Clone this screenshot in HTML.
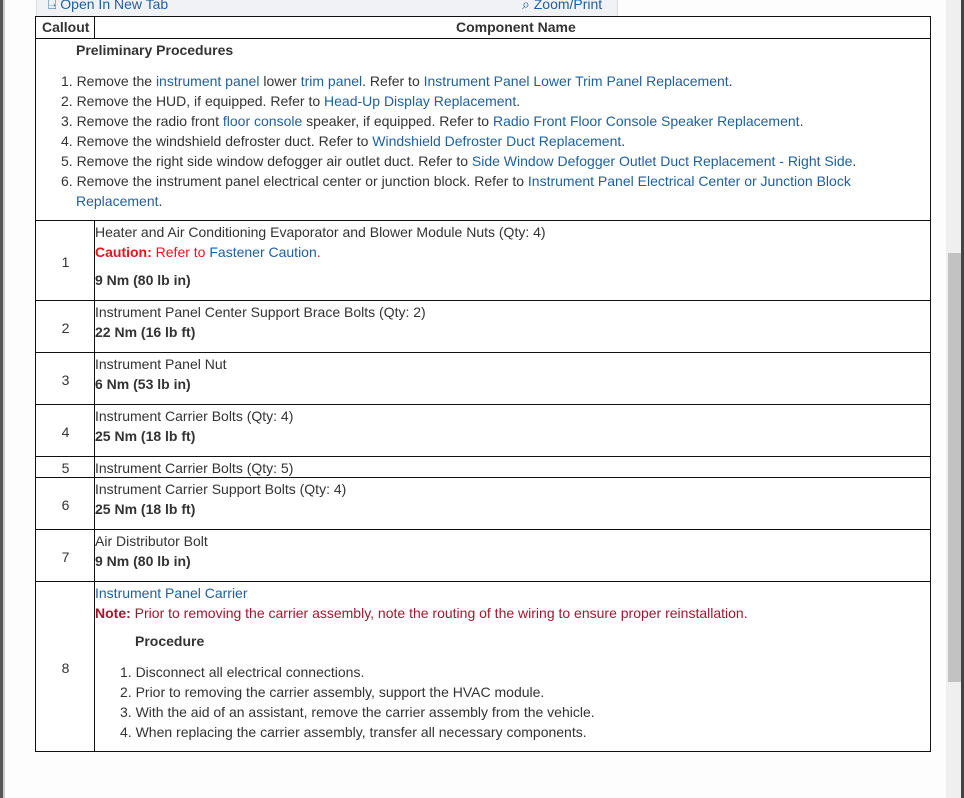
<!DOCTYPE html>
<html><head><meta charset="utf-8"><style>
*{margin:0;padding:0;box-sizing:border-box}
body{width:964px;height:798px;background:#fdfdfd;position:relative;overflow:hidden;font-family:"Liberation Sans",sans-serif;font-size:14px;color:#333}
.a{position:absolute;white-space:nowrap;line-height:20px}
.l{color:#1f5f9f}
.b{font-weight:bold}
.hl{position:absolute;left:35px;width:896px;height:1px;background:#111}
.red{color:#e8141c}
.nt{color:#a3172e}
.c{position:absolute;left:36px;width:59px;text-align:center;line-height:20px}
</style></head><body>
<div style="position:absolute;left:0;top:0;width:3px;height:798px;background:#555"></div>
<div style="position:absolute;left:3px;top:0;width:2px;height:798px;background:#ccc"></div>
<div style="position:absolute;right:0;top:0;width:3px;height:798px;background:#444"></div>
<div style="position:absolute;left:946px;top:0;width:15px;height:798px;background:#efefef"></div>
<div style="position:absolute;left:948px;top:253px;width:13px;height:429px;background:#c2c2c2"></div>
<div style="position:absolute;left:36px;top:-4px;width:582px;height:21px;background:#f0f2f5;border:1px solid #d8dbe0"></div>
<div class="a l" style="left:48px;top:-6px">⍈ Open In New Tab</div>
<div class="a l" style="left:522px;top:-6px">⌕ Zoom/Print</div>
<div style="position:absolute;left:35px;top:16px;width:896px;height:736px;border:1px solid #111;background:#fff"></div>
<div style="position:absolute;left:94px;top:16px;width:1px;height:22px;background:#111"></div>
<div style="position:absolute;left:94px;top:220px;width:1px;height:531px;background:#111"></div>
<div class="hl" style="top:38px"></div>
<div class="hl" style="top:220px"></div>
<div class="hl" style="top:300px"></div>
<div class="hl" style="top:352px"></div>
<div class="hl" style="top:404px"></div>
<div class="hl" style="top:456px"></div>
<div class="hl" style="top:477px"></div>
<div class="hl" style="top:529px"></div>
<div class="hl" style="top:581px"></div>
<div class="a b" style="left:42px;top:17px">Callout</div>
<div class="a b" style="left:456px;top:17px">Component Name</div>
<div class="a b" style="left:76px;top:40px">Preliminary Procedures</div>
<div class="a" style="left:61px;top:71px">1. Remove the <span class="l">instrument panel</span> lower <span class="l">trim panel</span>. Refer to <span class="l">Instrument Panel Lower Trim Panel Replacement</span>.</div>
<div class="a" style="left:61px;top:91px">2. Remove the HUD, if equipped. Refer to <span class="l">Head-Up Display Replacement</span>.</div>
<div class="a" style="left:61px;top:111px">3. Remove the radio front <span class="l">floor console</span> speaker, if equipped. Refer to <span class="l">Radio Front Floor Console Speaker Replacement</span>.</div>
<div class="a" style="left:61px;top:131px">4. Remove the windshield defroster duct. Refer to <span class="l">Windshield Defroster Duct Replacement</span>.</div>
<div class="a" style="left:61px;top:151px">5. Remove the right side window defogger air outlet duct. Refer to <span class="l">Side Window Defogger Outlet Duct Replacement - Right Side</span>.</div>
<div class="a" style="left:61px;top:171px">6. Remove the instrument panel electrical center or junction block. Refer to <span class="l">Instrument Panel Electrical Center or Junction Block</span></div>
<div class="a" style="left:76px;top:191px"><span class="l">Replacement</span>.</div>
<div class="c" style="top:252px">1</div>
<div class="a" style="left:95px;top:222px">Heater and Air Conditioning Evaporator and Blower Module Nuts (Qty: 4)</div>
<div class="a red" style="left:95px;top:242px"><b>Caution:</b> Refer to <span class="l">Fastener Caution</span>.</div>
<div class="a b" style="left:95px;top:270px">9 Nm (80 lb in)</div>
<div class="c" style="top:318px">2</div>
<div class="a" style="left:95px;top:302px">Instrument Panel Center Support Brace Bolts (Qty: 2)</div>
<div class="a b" style="left:95px;top:322px">22 Nm (16 lb ft)</div>
<div class="c" style="top:370px">3</div>
<div class="a" style="left:95px;top:354px">Instrument Panel Nut</div>
<div class="a b" style="left:95px;top:374px">6 Nm (53 lb in)</div>
<div class="c" style="top:422px">4</div>
<div class="a" style="left:95px;top:406px">Instrument Carrier Bolts (Qty: 4)</div>
<div class="a b" style="left:95px;top:426px">25 Nm (18 lb ft)</div>
<div class="c" style="top:458px">5</div>
<div class="a" style="left:95px;top:458px">Instrument Carrier Bolts (Qty: 5)</div>
<div class="c" style="top:495px">6</div>
<div class="a" style="left:95px;top:479px">Instrument Carrier Support Bolts (Qty: 4)</div>
<div class="a b" style="left:95px;top:499px">25 Nm (18 lb ft)</div>
<div class="c" style="top:547px">7</div>
<div class="a" style="left:95px;top:531px">Air Distributor Bolt</div>
<div class="a b" style="left:95px;top:551px">9 Nm (80 lb in)</div>
<div class="c" style="top:658px">8</div>
<div class="a l" style="left:95px;top:583px">Instrument Panel Carrier</div>
<div class="a nt" style="left:95px;top:603px"><b>Note:</b> Prior to removing the carrier assembly, note the routing of the wiring to ensure proper reinstallation.</div>
<div class="a b" style="left:135px;top:631px">Procedure</div>
<div class="a" style="left:120px;top:662px">1. Disconnect all electrical connections.</div>
<div class="a" style="left:120px;top:682px">2. Prior to removing the carrier assembly, support the HVAC module.</div>
<div class="a" style="left:120px;top:702px">3. With the aid of an assistant, remove the carrier assembly from the vehicle.</div>
<div class="a" style="left:120px;top:722px">4. When replacing the carrier assembly, transfer all necessary components.</div>
</body></html>
